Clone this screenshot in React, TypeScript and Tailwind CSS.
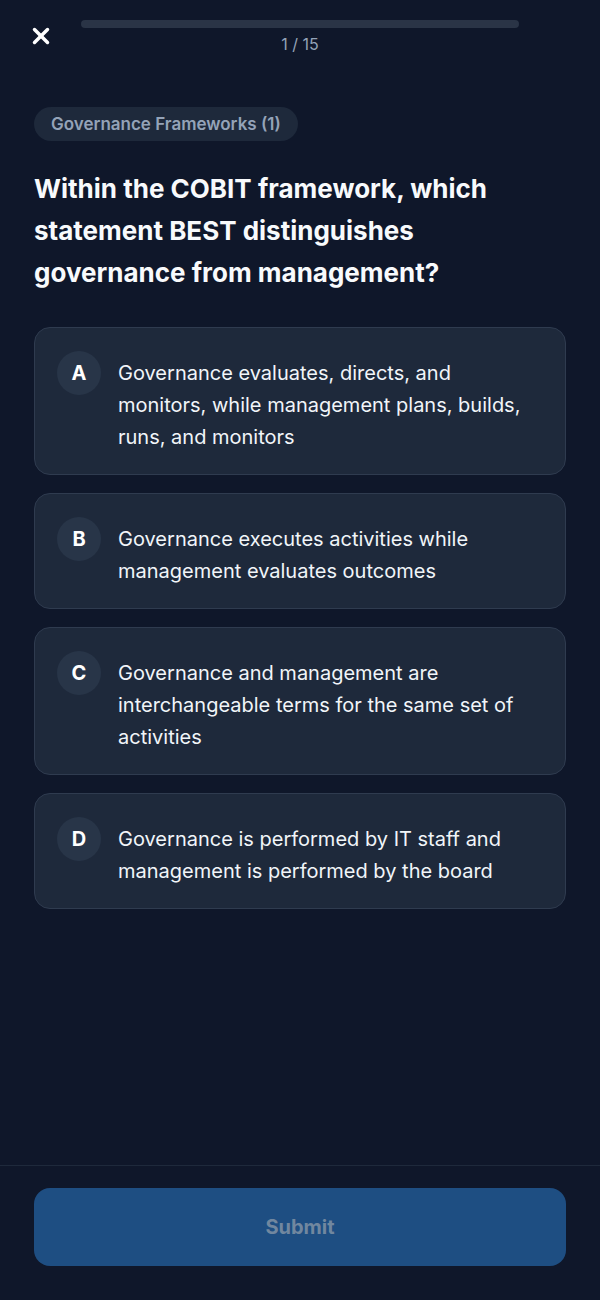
import React from 'react'
import { X } from 'lucide-react'

const options = [
  { key: 'A', text: 'Governance evaluates, directs, and monitors, while management plans, builds, runs, and monitors' },
  { key: 'B', text: 'Governance executes activities while management evaluates outcomes' },
  { key: 'C', text: 'Governance and management are interchangeable terms for the same set of activities' },
  { key: 'D', text: 'Governance is performed by IT staff and management is performed by the board' },
]

const App = () => {
  return (
    <div
      className="min-h-[1300px] bg-[#0f172a] text-white flex flex-col"
      style={{ fontFamily: 'Inter, "Noto Sans", sans-serif' }}
    >
      {/* header */}
      <div className="flex items-start pt-5">
        <div className="w-[81px] pl-[28px] pt-[3px]">
          <button className="text-white">
            <X size={26} strokeWidth={3.2} />
          </button>
        </div>
        <div className="flex-1 flex flex-col items-center">
          <div className="w-full h-2 rounded-full bg-[#2a3446]"></div>
          <div className="mt-[4px] text-base text-[#94a3b8]">1 / 15</div>
        </div>
        <div className="w-[81px]"></div>
      </div>

      {/* body */}
      <div className="px-[34px] pt-[51px]">
        <span className="inline-block rounded-full bg-[#1e293b] px-[17px] py-[6px] text-[17px] leading-[22px] font-semibold text-[#94a3b8]">
          Governance Frameworks (1)
        </span>

        <h1 className="mt-[27px] text-[26px] leading-[42px] font-bold text-[#f8fafc] pr-6">
          Within the COBIT framework, which statement BEST distinguishes governance from management?
        </h1>

        <div className="mt-[33px] flex flex-col gap-[18px]">
          {options.map((o) => (
            <button
              key={o.key}
              className="flex items-start text-left rounded-2xl border border-[#2f3b4f] bg-[#1e293b] pl-[22px] pr-[26px] pt-[29px] pb-[21px]"
            >
              <span className="shrink-0 w-[44px] h-[44px] -mt-[6px] rounded-full bg-[#283548] flex items-center justify-center text-xl font-bold text-white">
                {o.key}
              </span>
              <span className="ml-[17px] text-[20px] leading-8 text-[#f1f5f9]">{o.text}</span>
            </button>
          ))}
        </div>
      </div>

      <div className="flex-1"></div>

      {/* footer */}
      <div className="border-t border-[#1e293b] px-[34px] pt-[22px] pb-[34px]">
        <button
          disabled
          className="w-full h-[78px] rounded-2xl bg-[#1e4e82] text-xl font-bold text-[#71879f]"
        >
          Submit
        </button>
      </div>
    </div>
  )
}

export default App
